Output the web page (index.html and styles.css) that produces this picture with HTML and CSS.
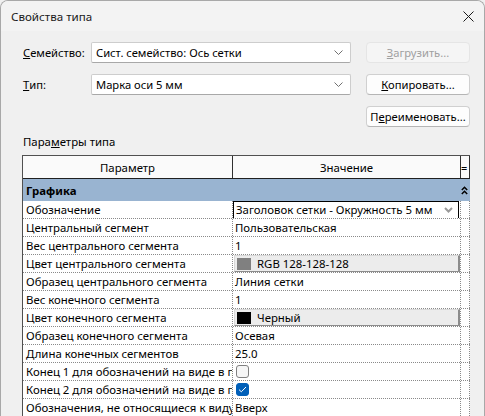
FILE: index.html
```html
<!DOCTYPE html>
<html lang="ru">
  <head>
    <meta charset="UTF-8" />
    <title>Свойства типа</title>
    <link rel="stylesheet" href="styles.css">
  </head>
  <body>
    <div class="window">
      <div class="titlebar">
        <span class="title">Свойства типа</span>
        <svg class="close" width="11" height="11" viewBox="0 0 11 11">
          <path d="M0.5 0.5L10.5 10.5M10.5 0.5L0.5 10.5" stroke="#1a1a1a" stroke-width="1" fill="none" />
        </svg>
      </div>

      <div class="client">
        <!-- Family / type pickers -->
        <div class="form">
          <label class="form-label"><u>С</u>емейство:</label>
          <div class="combo">
            <span>Сист. семейство: Ось сетки</span>
            <svg class="combo-arrow" width="9" height="5" viewBox="0 0 9 5"><path d="M0.5 0.5L4.5 4.5L8.5 0.5" stroke="#707070" fill="none" /></svg>
          </div>
          <button class="btn" disabled><u>З</u>агрузить...</button>

          <label class="form-label"><u>Т</u>ип:</label>
          <div class="combo">
            <span>Марка оси 5 мм</span>
            <svg class="combo-arrow" width="9" height="5" viewBox="0 0 9 5"><path d="M0.5 0.5L4.5 4.5L8.5 0.5" stroke="#707070" fill="none" /></svg>
          </div>
          <button class="btn"><u>К</u>опировать...</button>

          <button class="btn btn-rename">П<u>е</u>реименовать...</button>
        </div>

        <div class="section-label">Пара<u>м</u>етры типа</div>

        <!-- Type parameters grid -->
        <div class="props">
          <div class="props-head">
            <div class="cell name">Параметр</div>
            <div class="cell value">Значение</div>
            <div class="cell extra">=</div>
          </div>

          <div class="group">
            <span>Графика</span>
            <svg class="collapse" width="7" height="9" viewBox="0 0 7 9">
              <path d="M0.8 4L3.5 1.3L6.2 4M0.8 8L3.5 5.3L6.2 8" stroke="#000" stroke-width="1.5" fill="none" />
            </svg>
          </div>

          <div class="row">
            <div class="cell name">Обозначение</div>
            <div class="cell value">
              <div class="dropdown">
                <span>Заголовок сетки - Окружность 5 мм</span>
                <svg width="9" height="6" viewBox="0 0 9 6"><path d="M1 1L4.5 4.5L8 1" stroke="#9a9a9a" stroke-width="2" fill="none" /></svg>
              </div>
            </div>
            <div class="cell extra"></div>
          </div>
          <div class="row">
            <div class="cell name">Центральный сегмент</div>
            <div class="cell value">Пользовательская</div>
            <div class="cell extra"></div>
          </div>
          <div class="row">
            <div class="cell name">Вес центрального сегмента</div>
            <div class="cell value">1</div>
            <div class="cell extra"></div>
          </div>
          <div class="row">
            <div class="cell name">Цвет центрального сегмента</div>
            <div class="cell value">
              <div class="color-btn"><span class="swatch swatch-gray"></span>RGB 128-128-128</div>
            </div>
            <div class="cell extra"></div>
          </div>
          <div class="row">
            <div class="cell name">Образец центрального сегмента</div>
            <div class="cell value">Линия сетки</div>
            <div class="cell extra"></div>
          </div>
          <div class="row">
            <div class="cell name">Вес конечного сегмента</div>
            <div class="cell value">1</div>
            <div class="cell extra"></div>
          </div>
          <div class="row">
            <div class="cell name">Цвет конечного сегмента</div>
            <div class="cell value">
              <div class="color-btn"><span class="swatch swatch-black"></span>Черный</div>
            </div>
            <div class="cell extra"></div>
          </div>
          <div class="row">
            <div class="cell name">Образец конечного сегмента</div>
            <div class="cell value">Осевая</div>
            <div class="cell extra"></div>
          </div>
          <div class="row">
            <div class="cell name">Длина конечных сегментов</div>
            <div class="cell value">25.0</div>
            <div class="cell extra"></div>
          </div>
          <div class="row">
            <div class="cell name">Конец 1 для обозначений на виде в плане</div>
            <div class="cell value"><span class="check"></span></div>
            <div class="cell extra"></div>
          </div>
          <div class="row">
            <div class="cell name">Конец 2 для обозначений на виде в плане</div>
            <div class="cell value">
              <span class="check checked">
                <svg width="9" height="7" viewBox="0 0 9 7"><path d="M1 3.6L3.3 5.8L8 1" stroke="#fff" stroke-width="1" fill="none" /></svg>
              </span>
            </div>
            <div class="cell extra"></div>
          </div>
          <div class="row">
            <div class="cell name">Обозначения, не относящиеся к виду в плане</div>
            <div class="cell value">Вверх</div>
            <div class="cell extra"></div>
          </div>
        </div>
      </div>
    </div>
  </body>
</html>
```

FILE: styles.css
```css
body {
  margin: 0;
  padding: 0;
  font-family: "Noto Sans", "Open Sans", sans-serif;
  font-size: 11.4px;
  color: #000;
  background-color: #f0f0f0;
  overflow: hidden;
}

.window {
  box-sizing: border-box;
  width: 485px;
  height: 416px;
  border: 1px solid #a8a8a8;
  border-bottom: none;
  border-radius: 8px 8px 0 0;
  background-color: #f0f0f0;
  overflow: hidden;
}

.titlebar {
  height: 30px;
  display: flex;
  align-items: center;
  justify-content: space-between;
  padding: 0 10px 0 10px;
  background-color: #f3f3f3;
}

.title {
  font-size: 11.6px;
  color: #1a1a1a;
}

.client {
  padding: 11px 0 0 21px;
}

.form {
  display: grid;
  grid-template-columns: 68px 260px 119px;
  grid-auto-rows: 21px;
  row-gap: 11px;
  padding-left: 1px;
  font-size: 11.2px;
}

.form-label {
  display: flex;
  align-items: center;
}

.combo {
  box-sizing: border-box;
  display: flex;
  align-items: center;
  justify-content: space-between;
  padding: 0 7px 0 4px;
  background-color: #fff;
  border: 1px solid #cdcdcd;
  border-bottom-color: #a8a8a8;
  border-radius: 2px;
}

.btn {
  box-sizing: border-box;
  margin-left: 15px;
  font-family: inherit;
  font-size: 11.2px;
  color: #000;
  background-color: #fdfdfd;
  border: 1px solid #d0d0d0;
  border-bottom-color: #b5b5b5;
  border-radius: 4px;
  padding: 0;
}

.btn:disabled {
  color: #a0a0a0;
  background-color: #f5f5f5;
  border-color: #e5e5e5;
}

.btn-rename {
  grid-column: 3;
}

.section-label {
  margin-top: 7px;
  height: 16px;
  line-height: 16px;
  padding-left: 1px;
}

.props {
  box-sizing: border-box;
  width: 448px;
  margin-top: 5px;
  border-left: 1px solid #505050;
  border-top: 1px solid #505050;
  background-color: #fff;
}

.props-head,
.row {
  display: grid;
  grid-template-columns: 210px 228px 9px;
}

.props-head {
  height: 22px;
  border-bottom: 1px solid #202020;
  background-color: #fafafa;
}

.props-head .cell {
  display: flex;
  align-items: center;
  justify-content: center;
  border-right: 1px solid #303030;
}

.props-head .extra {
  font-size: 11px;
  justify-content: flex-start;
  overflow: hidden;
}

.group {
  height: 22px;
  display: flex;
  align-items: center;
  justify-content: space-between;
  padding: 0 2px 0 3px;
  background-color: #99b4d1;
  font-weight: bold;
}

.row {
  height: 18px;
  border-bottom: 1px dotted #8a8a8a;
  box-sizing: border-box;
}

.row .cell {
  display: flex;
  align-items: center;
  white-space: nowrap;
  overflow: hidden;
  border-right: 1px dotted #8a8a8a;
}

.row .name {
  padding-left: 3px;
}

.row .value {
  padding-left: 2px;
}

.dropdown {
  box-sizing: border-box;
  display: flex;
  align-items: center;
  justify-content: space-between;
  width: 226px;
  height: 18px;
  margin-left: -2px;
  padding: 0 5px 0 2px;
  border: 1px solid #000;
  background-color: #fff;
}

.color-btn {
  box-sizing: border-box;
  display: flex;
  align-items: center;
  width: 226px;
  height: 17px;
  margin-left: -1px;
  padding-left: 2px;
  background-color: #ececec;
  border: 1px solid #d8d8d8;
  border-right: 2px solid #8c8c8c;
  border-bottom: 1px solid #8c8c8c;
}

.swatch {
  width: 14px;
  height: 12px;
  margin-right: 6px;
}

.swatch-gray {
  background-color: #808080;
}

.swatch-black {
  background-color: #000;
}

.check {
  box-sizing: border-box;
  width: 13px;
  height: 13px;
  margin-left: 1px;
  display: flex;
  align-items: center;
  justify-content: center;
  border: 1px solid #808080;
  border-radius: 3px;
  background-color: #f6f6f6;
}

.check.checked {
  border-color: #005fb8;
  background-color: #005fb8;
}
```
